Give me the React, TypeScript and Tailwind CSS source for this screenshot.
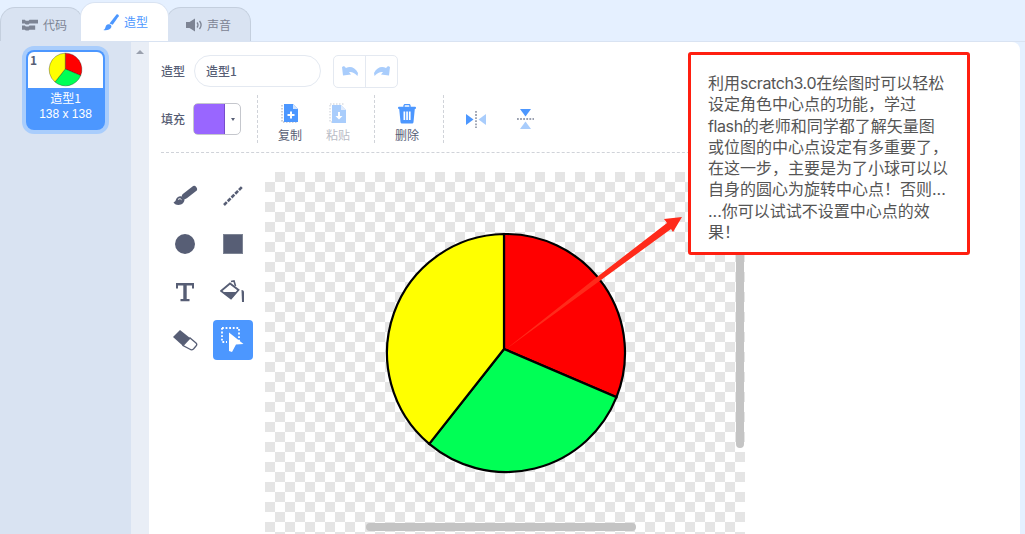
import React from "react";

const slate = "#575e75";
const blue = "#4c97ff";

function CodeIcon() {
  return (
    <svg width="16" height="13" viewBox="0 0 17 13">
      <path d="M0 1.500h3l1 1h3l1-1h9v4H8l-1 1H4l-1-1H0z" fill="#7d8494" />
      <path d="M0 7.500h3l1 1h3l1-1h6v4.500H8l-1 1H4l-1-1H0z" fill="#7d8494" />
    </svg>
  );
}

function BrushIcon() {
  return (
    <svg width="17" height="18" viewBox="0 0 17 18">
      <path d="M6.500 10.500 13.500 1.600c.9-1 2.900.4 2.200 1.600l-6 8.600z" fill={blue} />
      <path d="M5.500 11.200c2-.3 3.400 1.200 2.800 3-.8 2.500-5 3.600-8 2.800 1.700-.7 1.800-1.600 2.200-3 .4-1.600 1.400-2.600 3-2.800z" fill={blue} />
    </svg>
  );
}

function SoundIcon() {
  return (
    <svg width="17" height="14" viewBox="0 0 17 14">
      <path d="M0 4h3.500L9 .5v13L3.500 10H0z" fill="#7d8494" />
      <path d="M11 4.500c1.200 1.500 1.200 3.500 0 5M13.500 3c2 2.500 2 5.500 0 8" stroke="#7d8494" strokeWidth="1.300" fill="none" />
    </svg>
  );
}

function UndoIcon({ flip }: { flip?: boolean }) {
  return (
    <svg width="16" height="12" viewBox="0 0 16 12" className={flip ? "-scale-x-100" : ""}>
      <path d="M0 2 L2 1 L4 3 C8 1 13 2 16 8 L15.500 11 C12.500 7.500 9.500 6.500 7 7 L9 9.500 L1 10.500 Z" fill="#a9cdfc" />
    </svg>
  );
}

function CopyIcon() {
  return (
    <svg width="19" height="21" viewBox="0 0 19 21">
      <path d="M1 2v17h16" fill="none" stroke="#9aa0b0" strokeWidth="1" strokeDasharray="1.500 1.500" />
      <path d="M3 1h9l5 5v13H3z" fill={blue} />
      <path d="M12 1l5 5h-5z" fill="#d2e4fd" />
      <path d="M9 8.500h2v2.500h2.500v2H11v2.500H9V13H6.500v-2H9z" fill="#fff" />
    </svg>
  );
}

function PasteIcon() {
  return (
    <svg width="19" height="21" viewBox="0 0 19 21">
      <path d="M1 1h15M1 2v17h16" fill="none" stroke="#c8ccd4" strokeWidth="1" strokeDasharray="1.500 1.500" />
      <path d="M3 2h9l5 5v13H3z" fill="#a9cdfc" />
      <path d="M12 2l5 5h-5z" fill="#e0ecfe" />
      <path d="M9 9h2v4h2.500L10 16.500 6.500 13H9z" fill="#fff" />
    </svg>
  );
}

function TrashIcon() {
  return (
    <svg width="18" height="20" viewBox="0 0 18 20">
      <path d="M6 3V1.800C6 1 6.600.5 7.300.5h3.400c.7 0 1.300.5 1.300 1.300V3" fill="none" stroke={blue} strokeWidth="1.300" />
      <rect x="0" y="2.700" width="18" height="2.300" rx="1" fill={blue} />
      <path d="M1.200 5h15.600l-1.300 13c-.1 1-.8 1.600-1.800 1.600H4.300c-1 0-1.700-.6-1.800-1.600z" fill={blue} />
      <path d="M5.500 7.500h1.700v8.500H5.500zM8.200 7.500h1.700v8.500H8.200zM10.900 7.500h1.700v8.500h-1.700z" fill="#fff" />
    </svg>
  );
}

function FlipH() {
  return (
    <svg width="20" height="19" viewBox="0 0 20 19">
      <path d="M0 4l7.500 5.500L0 15z" fill={blue} />
      <path d="M20 4l-7.500 5.500L20 15z" fill="#a9cdfc" />
      <path d="M10 1v17" stroke="#9aa0b0" strokeWidth="1.800" strokeDasharray="1.800 1.300" />
    </svg>
  );
}

function FlipV() {
  return (
    <svg width="19" height="20" viewBox="0 0 19 20">
      <path d="M4 0l5.500 7.500L15 0z" fill={blue} />
      <path d="M4 20l5.500-7.500L15 20z" fill="#a9cdfc" />
      <path d="M1 10h17" stroke="#9aa0b0" strokeWidth="1.800" strokeDasharray="1.800 1.300" />
    </svg>
  );
}

function ToolIcon({ name }: { name: string }) {
  if (name === "brush")
    return (
      <svg width="26" height="22" viewBox="0 0 26 22">
        <path d="M13 11 22 4" stroke={slate} strokeWidth="6" strokeLinecap="round" />
        <path d="M1.500 17c1.500.2 2-.8 2.500-2.500.7-2.500 3.500-4 6-3l2.500 2.500c.3 3-2.500 6-6 6-2.500 0-4.500-1.200-5-3z" fill={slate} />
        <path d="M6 14.500c1.200-1 2.600-1 3.500.2" stroke="#fff" strokeWidth="1" fill="none" />
      </svg>
    );
  if (name === "line")
    return (
      <svg width="22" height="22" viewBox="0 0 22 22">
        <path d="M2 20 20 2" stroke={slate} strokeWidth="2.600" strokeDasharray="4 1.300" />
      </svg>
    );
  if (name === "circle")
    return <div className="w-[20px] h-[20px] rounded-full bg-[#575e75]" />;
  if (name === "rect")
    return <div className="w-[20px] h-[20px] bg-[#575e75] border border-[#7d8494]" />;
  if (name === "text")
    return (
      <svg width="20" height="20" viewBox="0 0 20 20">
        <path d="M1 1h18v5.500h-2V3.500h-5.300v13.500h2.800v2.300h-9v-2.300h2.800V3.500H3v3H1z" fill={slate} />
      </svg>
    );
  if (name === "fill")
    return (
      <svg width="26" height="24" viewBox="0 0 26 24">
        <path d="M11 1.500 14 1l1.500 5" fill="none" stroke={slate} strokeWidth="1.600" />
        <path d="M1 11l9-7.500 8.500 6.500L11 18.500z" fill="none" stroke={slate} strokeWidth="1.800" />
        <path d="M3 12h14l-6 7z" fill={slate} />
        <path d="M21.500 10c2 0 2.500 1 2.500 2.500V22h-2z" fill={slate} />
      </svg>
    );
  if (name === "eraser")
    return (
      <svg width="26" height="22" viewBox="0 0 26 22">
        <path d="M1 8l7-7 10 8-7.500 7.500z" fill={slate} />
        <path d="M11 16.500 18 9l6 5c1 1 1 2 0 3l-2.500 3c-1 .8-2.500 1-3.500.3z" fill="#fff" stroke={slate} strokeWidth="1.300" />
      </svg>
    );
  return (
    <svg width="24" height="26" viewBox="0 0 24 26">
      <path d="M1 1h17v13M1 1v14h5" fill="none" stroke="#fff" strokeWidth="1.800" strokeDasharray="1.800 1.800" />
      <path d="M8 5.500 22.500 17 15 17.500l-4 7.500-3-1z" fill="#fff" />
    </svg>
  );
}

function ActionButton({ label, muted, children }: { label: string; muted?: boolean; children: React.ReactNode }) {
  return (
    <div className="w-[48px] h-[40px] flex flex-col items-center justify-between">
      <div className="h-[21px] flex items-center">{children}</div>
      <span className={muted ? "text-[12px] leading-[16px] text-[#b9bcc6]" : "text-[12px] leading-[16px] text-[#575e75]"}>{label}</span>
    </div>
  );
}

function Divider() {
  return <div className="h-[48px] border-l border-dashed border-[#d0d3d9]" />;
}

function Pie({ size }: { size: number }) {
  return (
    <svg width={size} height={size} viewBox="-120 -120 240 240" className="overflow-visible">
      <path d="M-2-4V-118.980A119 119 0 0 1 110.500 44.200Z" fill="#ff0000" stroke="#000" strokeWidth="2.200" />
      <path d="M-2-4 110.500 44.200A119 119 0 0 1-76.800 90.900Z" fill="#00ff55" stroke="#000" strokeWidth="2.200" />
      <path d="M-2-4-76.800 90.900A119 119 0 0 1-2-118.980Z" fill="#ffff00" stroke="#000" strokeWidth="2.200" />
    </svg>
  );
}

const tools = ["brush", "line", "circle", "rect", "text", "fill", "eraser", "select"];

export default function App() {
  return (
    <div className="relative w-[1025px] h-[534px] overflow-hidden flex flex-col bg-[#e5f0ff] font-['Noto_Sans_CJK_SC','Noto_Sans',sans-serif] text-[#575e75]">
      {/* tabs */}
      <div className="h-[41px] flex items-end shrink-0">
        <div className="w-[83px] h-[34px] -mr-[3px] flex items-center justify-center gap-[5px] pl-[6px] bg-[#d9e3f2] border border-b-0 border-[#c4cfde] rounded-t-[15px] text-[12px] text-[#7d8494]">
          <CodeIcon />
          <span>代码</span>
        </div>
        <div className="relative z-10 w-[89px] h-[39px] flex items-center justify-center gap-[4px] pl-[2px] bg-white border border-b-0 border-[#d9e3f2] rounded-t-[15px] text-[12px] text-[#4c97ff]">
          <BrushIcon />
          <span>造型</span>
        </div>
        <div className="w-[85px] h-[34px] -ml-[3px] flex items-center justify-center gap-[4px] bg-[#d9e3f2] border border-b-0 border-[#c4cfde] rounded-t-[15px] text-[12px] text-[#7d8494]">
          <SoundIcon />
          <span>声音</span>
        </div>
      </div>

      <div className="flex flex-1 min-h-0 border-t border-[#d9e3f2]">
        {/* costume list */}
        <div className="w-[131px] shrink-0 bg-[#d9e3f2] pt-[4px] pl-[22px]">
          <div className="w-[87px] h-[88px] p-[4px] rounded-[12px] bg-[#a9cdfc]">
            <div className="relative w-full h-full rounded-[8px] bg-[#4c97ff] p-[2px] flex flex-col items-center">
              <div className="relative w-full h-[36px] bg-white rounded-t-[6px] flex justify-center pt-[1px] shrink-0">
                <span className="absolute left-[2px] top-[1px] text-[12px] leading-[14px] font-bold text-[#575e75]">1</span>
                <Pie size={33} />
              </div>
              <span className="mt-[2px] text-[12px] leading-[16px] text-white">造型1</span>
              <span className="text-[12px] leading-[16px] text-white font-['Liberation_Sans',sans-serif]">138 x 138</span>
            </div>
          </div>
        </div>

        {/* scroll gutter */}
        <div className="w-[18px] shrink-0 bg-[#e9eef6] flex justify-center pt-[8px]">
          <div className="w-0 h-0 border-x-[4px] border-x-transparent border-b-[4px] border-b-[#9aa0ad]" />
        </div>

        {/* editor */}
        <div className="flex-1 mr-[5px] bg-white rounded-tr-[8px] pl-[12px] flex flex-col min-w-0">
          <div className="h-[32px] mt-[13px] flex items-center">
            <span className="w-[33px] text-[12px] font-medium">造型</span>
            <div className="w-[127px] h-[32px] rounded-full border border-[#e4e9f1] pl-[11px] flex items-center text-[12px] font-medium">造型1</div>
            <div className="ml-[12px] w-[65px] h-[33px] flex border border-[#e4e9f1] rounded-[5px]">
              <div className="flex-1 flex items-center justify-center border-r border-[#e4e9f1]"><UndoIcon /></div>
              <div className="flex-1 flex items-center justify-center"><UndoIcon flip /></div>
            </div>
          </div>

          <div className="h-[48px] mt-[8px] flex items-center">
            <span className="w-[32px] text-[12px] font-medium">填充</span>
            <div className="w-[48px] h-[32px] flex rounded-[5px] border border-[#c5c7cd] overflow-hidden">
              <div className="w-[32px] -m-px bg-[#9966ff] border border-[#774dcb] rounded-l-[5px]" />
              <div className="flex-1 flex items-center justify-center">
                <div className="ml-[2px] w-0 h-0 border-x-[2.500px] border-x-transparent border-t-[3px] border-t-[#575e75]" />
              </div>
            </div>
            <div className="ml-[16px]"><Divider /></div>
            <div className="ml-[8px] mt-[8px]"><ActionButton label="复制"><CopyIcon /></ActionButton></div>
            <div className="mt-[8px]"><ActionButton label="粘贴" muted><PasteIcon /></ActionButton></div>
            <div className="ml-[12px]"><Divider /></div>
            <div className="ml-[8px] mt-[8px]"><ActionButton label="删除"><TrashIcon /></ActionButton></div>
            <div className="ml-[12px]"><Divider /></div>
            <div className="ml-[8px] w-[48px] flex justify-center"><FlipH /></div>
            <div className="ml-[1px] w-[48px] flex justify-center"><FlipV /></div>
          </div>

          <div className="mt-[9px] w-[584px] border-t border-dashed border-[#d0d3d9]" />

          <div className="mt-[19px] flex flex-1 min-h-0">
            <div className="w-[104px] shrink-0 pl-[4px] mt-[4px]">
              <div className="grid grid-cols-[40px_40px] gap-x-[8px] gap-y-[8px]">
                {tools.map((t) => (
                  <div
                    key={t}
                    className={t === "select" ? "w-[40px] h-[40px] rounded-[4px] bg-[#4c97ff] flex items-center justify-center" : "w-[40px] h-[40px] flex items-center justify-center"}
                  >
                    <ToolIcon name={t} />
                  </div>
                ))}
              </div>
            </div>

            {/* canvas */}
            <div className="relative w-[480px] h-[362px] rounded-t-[4px] bg-[repeating-conic-gradient(#e5e5e5_0_25%,#ffffff_0_50%)] bg-[length:20px_20px]">
              <div className="absolute left-[121px] top-[61px]"><Pie size={240} /></div>
              <div className="absolute left-[471px] top-[75px] w-[8px] h-[201px] rounded-full bg-[#c4c4c4]" />
              <div className="absolute left-[101px] top-[351px] w-[270px] h-[8px] rounded-full bg-[#c4c4c4]" />
            </div>
          </div>
        </div>
      </div>

      {/* annotation drawn on top of the screenshot */}
      <svg className="absolute left-0 top-0 pointer-events-none" width="1025" height="534" viewBox="0 0 1025 534">
        <path d="M505 350 597 277 667 223 664 219 682 217 673 232 671 229 601 280Z" fill="#ff2a1a" />
      </svg>
      <div className="absolute left-[688px] top-[52px] w-[282px] h-[203px] bg-white border-[3px] border-[#ff1f10] rounded-[3px] pl-[17px] pt-[18px] text-[16px] leading-[21.300px] text-[#555555] whitespace-nowrap font-['Inter','Noto_Sans_CJK_SC',sans-serif]">
        <div>利用<span className="tracking-[-0.4px]">scratch3.0</span>在绘图时可以轻松</div>
        <div>设定角色中心点的功能，学过</div>
        <div><span className="tracking-[-0.4px]">flash</span>的老师和同学都了解矢量图</div>
        <div>或位图的中心点设定有多重要了，</div>
        <div>在这一步，主要是为了小球可以以</div>
        <div>自身的圆心为旋转中心点！否则...</div>
        <div>...你可以试试不设置中心点的效</div>
        <div>果！</div>
      </div>
    </div>
  );
}
